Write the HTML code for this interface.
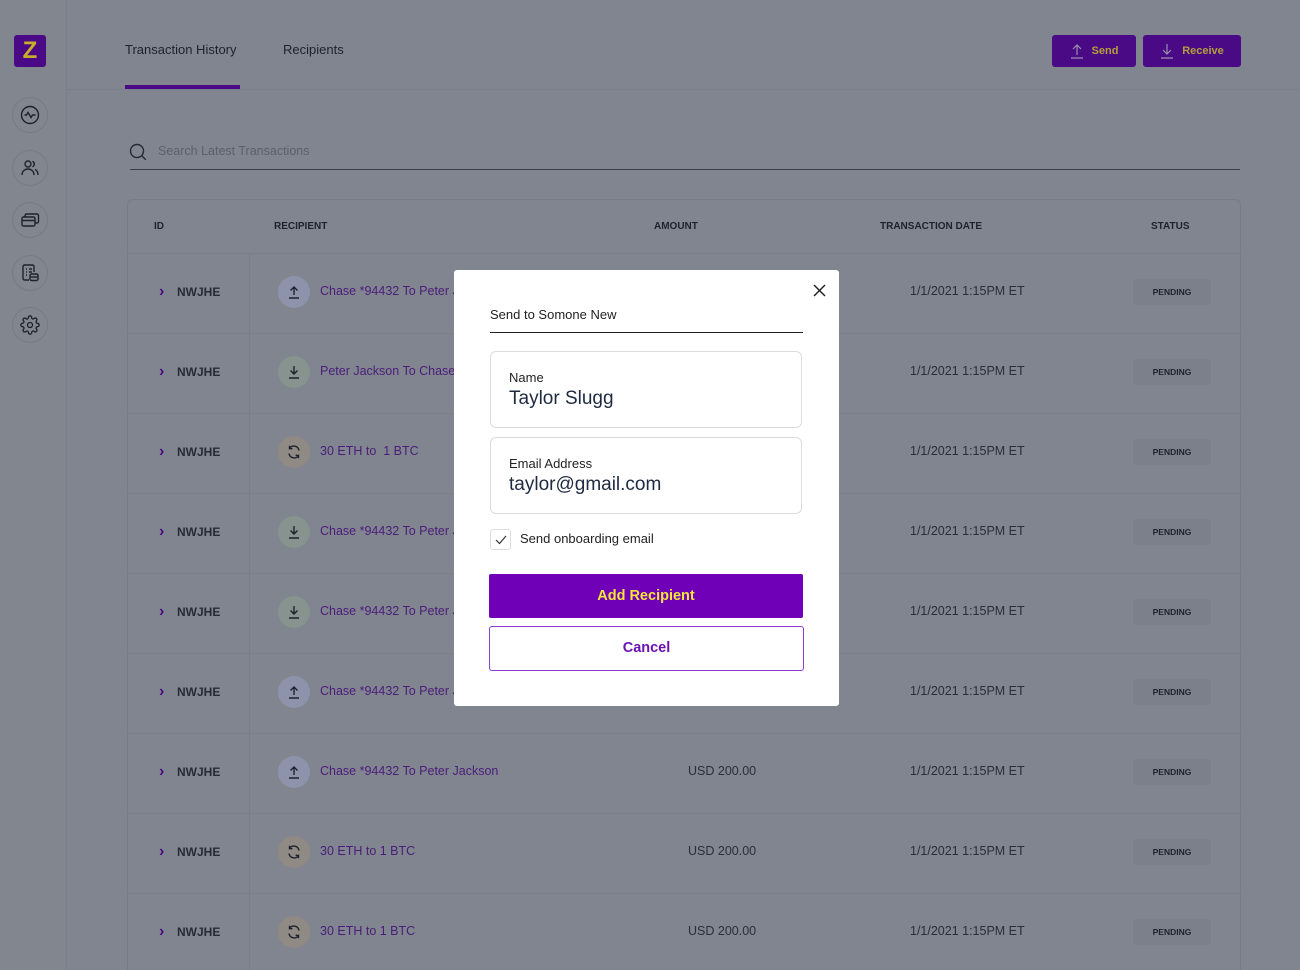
<!DOCTYPE html>
<html><head><meta charset="utf-8"><style>
*{box-sizing:border-box;margin:0;padding:0}
html{overflow:hidden;width:1300px;height:970px}
body{width:1300px;height:970px;overflow:hidden;background:#80858f;font-family:"Liberation Sans",sans-serif;color:#262a36;position:relative}
.a{position:absolute}
.side{left:0;top:0;width:67px;height:970px;background:#81868f;border-right:1px solid #7a7f89}
.logo{left:14px;top:35px;width:32px;height:32px;background:#4a0a85;border-radius:3px;color:#c9ad2a;font-weight:bold;font-size:24px;text-align:center;line-height:32px}
.nb{left:12px;width:36px;height:36px;border-radius:50%;border:1px solid #767b85;display:flex;align-items:center;justify-content:center}
.tab{top:42px;font-size:13px;color:#1e222c}
.btn{top:35px;height:32px;background:#4a0a85;border-radius:3px;color:#b3a03a;font-weight:bold;font-size:11px;display:flex;align-items:center;justify-content:center;gap:8px}
.tbl{left:127px;top:199px;width:1114px;height:780px;border:1px solid #777c86;border-radius:6px}
.th{top:221px;font-size:10px;font-weight:bold;color:#1e222c}
.row{left:127px;width:1114px;height:80px;border-top:1px solid #7a7f89}
.id{font-size:12px;font-weight:bold;color:#262a36}
.chev{color:#4a0a85;font-weight:bold;font-size:16px;line-height:16px}
.ic{width:32px;height:32px;border-radius:50%;display:flex;align-items:center;justify-content:center}
.rec{font-size:12.5px;color:#4b1d7a}
.amt,.dt{font-size:12.5px;color:#2a2e38}
.pend{width:78px;height:26px;background:#7b808a;border-radius:3px;font-size:8.5px;font-weight:bold;text-align:center;line-height:26px;color:#1e222c}
.modal{left:454px;top:270px;width:385px;height:436px;background:#fff;border-radius:3px}
.fld{left:36px;width:312px;height:77px;border:1px solid #dcdcdc;border-radius:6px}
</style></head><body>
<div class="a side"></div>
<div class="a logo">Z</div>
<div class="a nb" style="top:97px"><svg width="20" height="20" viewBox="0 0 20 20" fill="none" stroke="#1e222c" stroke-width="1.4"><circle cx="10" cy="10" r="8.5"/><path d="M4.5 10h2l1.5-2.5 3 5 1.5-2.5h3"/></svg></div>
<div class="a nb" style="top:150px"><svg width="20" height="20" viewBox="0 0 20 20" fill="none" stroke="#1e222c" stroke-width="1.4"><circle cx="8" cy="6" r="3"/><path d="M2 17c0-3.5 2.5-6 6-6s6 2.5 6 6M12.5 3.3a3 3 0 010 5.5M15 11.5c2 .8 3 2.8 3 5.5"/></svg></div>
<div class="a nb" style="top:202px"><svg width="20" height="20" viewBox="0 0 20 20" fill="none" stroke="#1e222c" stroke-width="1.4"><rect x="2" y="7" width="13" height="9" rx="1.5"/><path d="M2 10.5h13M5 7V5.5a1.5 1.5 0 011.5-1.5H17a1.5 1.5 0 011.5 1.5v6a1.5 1.5 0 01-1.5 1.5h-2"/></svg></div>
<div class="a nb" style="top:255px"><svg width="20" height="20" viewBox="0 0 20 20" fill="none" stroke="#1e222c" stroke-width="1.4"><path d="M14 9V3.5A1.5 1.5 0 0012.5 2h-8A1.5 1.5 0 003 3.5v12A1.5 1.5 0 004.5 17H9M6 6h1M9 6h3M6 9h1M9 9h3M6 12h1"/><rect x="10" y="11" width="8" height="6.5" rx="1.5"/><path d="M10 14h8"/></svg></div>
<div class="a nb" style="top:307px"><svg width="20" height="20" viewBox="0 0 24 24" fill="none" stroke="#1e222c" stroke-width="1.6"><circle cx="12" cy="12" r="3"/><path d="M19.4 15a1.650 1.650 0 00.33 1.820l.06.06a2 2 0 11-2.830 2.830l-.06-.06a1.650 1.650 0 00-1.820-.33 1.650 1.650 0 00-1 1.510V21a2 2 0 11-4 0v-.09A1.650 1.650 0 009 19.4a1.650 1.650 0 00-1.820.33l-.06.06a2 2 0 11-2.830-2.830l.06-.06A1.650 1.650 0 004.680 15a1.650 1.650 0 00-1.510-1H3a2 2 0 110-4h.09A1.650 1.650 0 004.600 9a1.650 1.650 0 00-.33-1.820l-.06-.06a2 2 0 112.830-2.830l.06.06A1.650 1.650 0 009 4.680a1.650 1.650 0 001-1.510V3a2 2 0 114 0v.09a1.650 1.650 0 001 1.510 1.650 1.650 0 001.820-.33l.06-.06a2 2 0 112.830 2.830l-.06.06A1.650 1.650 0 0019.4 9a1.650 1.650 0 001.510 1H21a2 2 0 110 4h-.09a1.650 1.650 0 00-1.510 1z"/></svg></div>

<div class="a tab" style="left:125px">Transaction History</div>
<div class="a tab" style="left:283px">Recipients</div>
<div class="a" style="left:125px;top:85px;width:115px;height:4px;background:#4a0a85"></div>
<div class="a" style="left:67px;top:89px;width:1233px;height:1px;background:#7a7f89"></div>
<div class="a btn" style="left:1052px;width:84px"><svg width="14" height="16" viewBox="0 0 14 16" fill="none" stroke="#9a8fb0" stroke-width="1.2"><path d="M7 12V2M3 6l4-4 4 4M1 15h12"/></svg>Send</div>
<div class="a btn" style="left:1143px;width:98px"><svg width="14" height="16" viewBox="0 0 14 16" fill="none" stroke="#9a8fb0" stroke-width="1.2"><path d="M7 1v10M3 7l4 4 4-4M1 15h12"/></svg>Receive</div>

<svg class="a" style="left:129px;top:143px" width="18" height="18" viewBox="0 0 18 18" fill="none" stroke="#262a36" stroke-width="1.4"><circle cx="8" cy="8" r="6.5"/><path d="M12.8 12.8l4 4"/></svg>
<div class="a" style="left:158px;top:144px;font-size:12.5px;color:#5c606a">Search Latest Transactions</div>
<div class="a" style="left:130px;top:169px;width:1110px;height:1px;background:#3b3f4a"></div>

<div class="a tbl"></div>
<div class="a th" style="left:154px">ID</div>
<div class="a th" style="left:274px">RECIPIENT</div>
<div class="a th" style="left:654px">AMOUNT</div>
<div class="a th" style="left:880px">TRANSACTION DATE</div>
<div class="a th" style="left:1151px">STATUS</div>
<div class="a" style="left:249px;top:253px;width:1px;height:717px;background:#7a7f89"></div>

<div id="rows"></div>
<script>
var up='<svg width="14" height="14" viewBox="0 0 14 14" fill="none" stroke="#1e222c" stroke-width="1.4"><path d="M7 10V2M3.5 5.5L7 2l3.5 3.5M2 13h10"/></svg>';
var dn='<svg width="14" height="14" viewBox="0 0 14 14" fill="none" stroke="#1e222c" stroke-width="1.4"><path d="M7 1v8M3.5 5.5L7 9l3.5-3.5M2 13h10"/></svg>';
var sw='<svg width="16" height="16" viewBox="0 0 16 16" fill="none" stroke="#1e222c" stroke-width="1.4"><path d="M13 6.5A5.2 5.2 0 003.5 4.5M3.5 1.8v2.9h2.9M3 9.5a5.2 5.2 0 009.5 2M12.5 14.2v-2.9H9.6"/></svg>';
var d=[[up,'#8e93ac','Chase *94432 To Peter Jackson'],[dn,'#86938f','Peter Jackson To Chase *94432'],[sw,'#908a85','30 ETH to &nbsp;1 BTC'],[dn,'#86938f','Chase *94432 To Peter Jackson'],[dn,'#86938f','Chase *94432 To Peter Jackson'],[up,'#8e93ac','Chase *94432 To Peter Jackson'],[up,'#8e93ac','Chase *94432 To Peter Jackson'],[sw,'#908a85','30 ETH to 1 BTC'],[sw,'#908a85','30 ETH to 1 BTC']];
var h='';
d.forEach(function(r,i){var c=292+80*i;
h+='<div class="a row" style="top:'+(c-39)+'px"></div>';
h+='<div class="a chev" style="left:159px;top:'+(c-8)+'px">›</div>';
h+='<div class="a id" style="left:177px;top:'+(c-7)+'px">NWJHE</div>';
h+='<div class="a ic" style="left:278px;top:'+(c-16)+'px;background:'+r[1]+'">'+r[0]+'</div>';
h+='<div class="a rec" style="left:320px;top:'+(c-8)+'px">'+r[2]+'</div>';
h+='<div class="a amt" style="left:688px;top:'+(c-8)+'px">USD 200.00</div>';
h+='<div class="a dt" style="left:910px;top:'+(c-8)+'px">1/1/2021 1:15PM ET</div>';
h+='<div class="a pend" style="left:1133px;top:'+(c-13)+'px">PENDING</div>';});
document.getElementById('rows').innerHTML=h;
</script>

<div class="a modal">
<svg class="a" style="left:359px;top:14px" width="13" height="13" viewBox="0 0 13 13" stroke="#222" stroke-width="1.5"><path d="M1 1l11 11M12 1L1 12"/></svg>
<div class="a" style="left:36px;top:37px;font-size:13px;color:#222">Send to Somone New</div>
<div class="a" style="left:36px;top:62px;width:313px;height:1px;background:#222"></div>
<div class="a fld" style="top:81px"><div class="a" style="left:18px;top:18px;font-size:13px;color:#222">Name</div><div class="a" style="left:18px;top:36px;font-size:19px;color:#1e2a40">Taylor Slugg</div></div>
<div class="a fld" style="top:167px"><div class="a" style="left:18px;top:18px;font-size:13px;color:#222">Email Address</div><div class="a" style="left:18px;top:36px;font-size:19px;color:#1e2a40">taylor@gmail.com</div></div>
<div class="a" style="left:36px;top:259px;width:21px;height:21px;border:1px solid #ddd;border-radius:3px"><svg class="a" style="left:4px;top:5px" width="12" height="10" viewBox="0 0 12 10" fill="none" stroke="#333" stroke-width="1.2"><path d="M1 5l3.5 3.5L11 1"/></svg></div>
<div class="a" style="left:66px;top:261px;font-size:13px;color:#222">Send onboarding email</div>
<div class="a" style="left:35px;top:304px;width:314px;height:44px;background:#6f00b8;border-radius:2px;color:#f4e53a;font-weight:bold;font-size:14.5px;text-align:center;line-height:44px">Add Recipient</div>
<div class="a" style="left:35px;top:356px;width:315px;height:45px;border:1.5px solid #8a3fd0;border-radius:3px;color:#6a12b0;font-weight:bold;font-size:14.5px;text-align:center;line-height:42px">Cancel</div>
</div>
</body></html>
